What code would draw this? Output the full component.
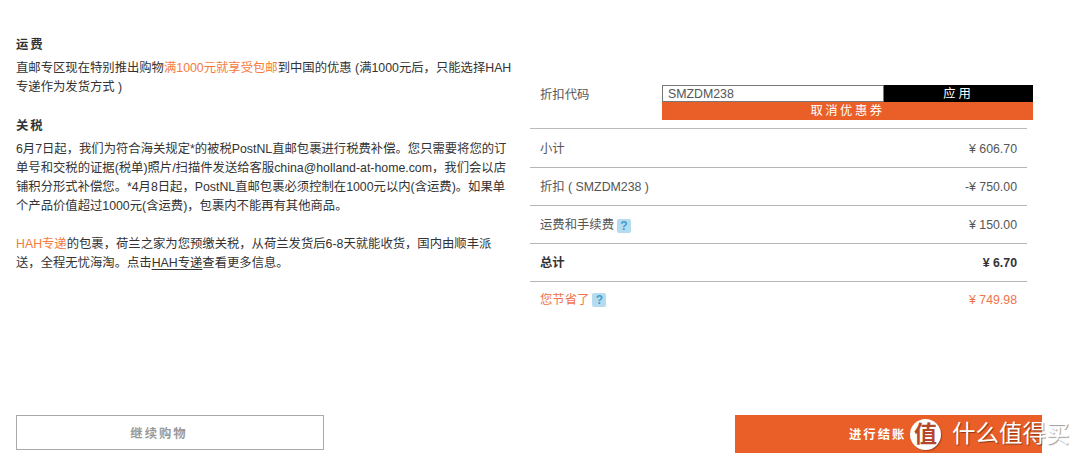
<div class="page">
  <div class="top">
    <section class="notes">
      <h4>运费</h4>
      <p>直邮专区现在特别推出购物<span class="hi">满1000元就享受包邮</span>到中国的优惠 (满1000元后，只能选择HAH专递作为发货方式 )</p>
      <h4 class="second">关税</h4>
      <p>6月7日起，我们为符合海关规定*的被税PostNL直邮包裹进行税费补偿。您只需要将您的订单号和交税的证据(税单)照片/扫描件发送给客服china@holland-at-home.com，我们会以店铺积分形式补偿您。*4月8日起，PostNL直邮包裹必须控制在1000元以内(含运费)。如果单个产品价值超过1000元(含运费)，包裹内不能再有其他商品。</p>
      <p class="third"><span class="hi">HAH专递</span>的包裹，荷兰之家为您预缴关税，从荷兰发货后6-8天就能收货，国内由顺丰派送，全程无忧海淘。点击<u>HAH专递</u>查看更多信息。</p>
    </section>
    <section class="summary">
      <div class="coupon">
        <div class="coupon-label">折扣代码</div>
        <div class="coupon-box">
          <div class="coupon-row">
            <div class="code">SMZDM238</div>
            <div class="apply">应用</div>
          </div>
          <div class="cancel">取消优惠券</div>
        </div>
      </div>
      <div class="rows">
        <div class="row"><span>小计</span><span>¥ 606.70</span></div>
        <div class="row"><span>折扣 ( SMZDM238 )</span><span>-¥ 750.00</span></div>
        <div class="row"><span class="lab">运费和手续费 <i class="q">?</i></span><span>¥ 150.00</span></div>
        <div class="row total"><span>总计</span><span>¥ 6.70</span></div>
        <div class="row save"><span class="lab">您节省了 <i class="q">?</i></span><span>¥ 749.98</span></div>
      </div>
    </section>
  </div>
  <div class="actions">
    <button class="continue">继续购物</button>
    <button class="checkout">进行结账</button>
  </div>
  <div class="mark">
    <span class="seal">值</span>
    <span class="brand">什么值得买</span>
  </div>
</div>

<style>
  :global(body) { margin: 0; background: #fff; }
  .page {
    position: relative;
    width: 1080px;
    height: 460px;
    overflow: hidden;
    box-sizing: border-box;
    padding-top: 36px;
    font-family: "Liberation Sans", "Noto Sans CJK SC", sans-serif;
    font-size: 12.33px;
    line-height: 19px;
    color: #333;
  }
  .top { display: flex; height: 379px; }
  .notes { width: 500px; margin-left: 16px; }
  h4 { margin: 0 0 4px; font-size: 12.33px; font-weight: 700; line-height: 19px; letter-spacing: 2px; color: #333; }
  h4.second { margin-top: 20px; }
  p { margin: 0; }
  p.third { margin-top: 19px; max-width: 490px; }
  .hi { color: #f47b3d; }
  u { text-underline-offset: 2px; }
  .summary { width: 497px; margin-left: 14px; padding-top: 49px; color: #555; }
  .coupon { display: flex; height: 43px; }
  .coupon-label { flex: none; width: 132px; padding-left: 10px; box-sizing: border-box; line-height: 20px; }
  .coupon-box { width: 371px; flex: none; }
  .coupon-row { display: flex; height: 17px; }
  .code {
    box-sizing: border-box;
    width: 222px;
    height: 17px;
    border: 1px solid #777;
    padding-left: 5px;
    line-height: 17px;
    font-size: 12.33px;
    color: #555;
  }
  .apply {
    flex: 1;
    background: #000;
    color: #fff;
    text-align: center;
    line-height: 19px;
    letter-spacing: 3px;
  }
  .cancel {
    height: 18px;
    background: #e95f27;
    color: #fff;
    text-align: center;
    line-height: 19px;
    letter-spacing: 2.5px;
  }
  .rows { border-top: 1px solid #bbb; }
  .row {
    display: flex;
    justify-content: space-between;
    align-items: center;
    box-sizing: border-box;
    height: 38px;
    padding: 2px 10px 0;
    border-bottom: 1px solid #b5b5b5;
  }
  .row:first-child { height: 39px; padding-top: 3px; }
  .row:last-child { border-bottom: 0; padding-top: 0; margin-top: -1px; }
  .total { font-weight: 700; color: #333; }
  .save { color: #f0734a; }
  .lab { display: flex; align-items: center; gap: 3px; }
  .q {
    display: inline-block;
    width: 14px;
    height: 14px;
    border-radius: 2px;
    background: #b5dcee;
    color: #3d9bd0;
    font-style: normal;
    font-weight: 700;
    font-size: 12px;
    line-height: 14px;
    text-align: center;
  }
  .actions { display: flex; justify-content: space-between; width: 1026px; margin-left: 16px; }
  button {
    box-sizing: border-box;
    font: 700 12.33px/1 "Liberation Sans", "Noto Sans CJK SC", sans-serif;
    letter-spacing: 2px;
    height: 35px;
    padding: 0;
  }
  .continue { width: 308px; background: #fff; border: 1px solid #aaa; color: #999; padding: 4px 22px 0 0; }
  .checkout {
    width: 307px;
    height: 38px;
    background: #e95f27;
    border: 0;
    color: #fff;
    text-align: left;
    padding: 2px 0 0 114px;
  }
  .mark {
    position: absolute;
    left: 910px;
    top: 415px;
    height: 38px;
    display: flex;
    align-items: center;
    gap: 11px;
  }
  .seal {
    width: 31px;
    height: 31px;
    border-radius: 50%;
    background: #fff;
    color: #b5482a;
    font-size: 23px;
    font-weight: 700;
    line-height: 31px;
    text-align: center;
    box-shadow: 1px 1px 1px rgba(0, 0, 0, .3);
  }
  .brand {
    color: #fff;
    font-size: 23.5px;
    line-height: 38px;
    letter-spacing: 0;
    text-shadow: 1px 1px 1px rgba(0, 0, 0, .4);
  }
</style>
